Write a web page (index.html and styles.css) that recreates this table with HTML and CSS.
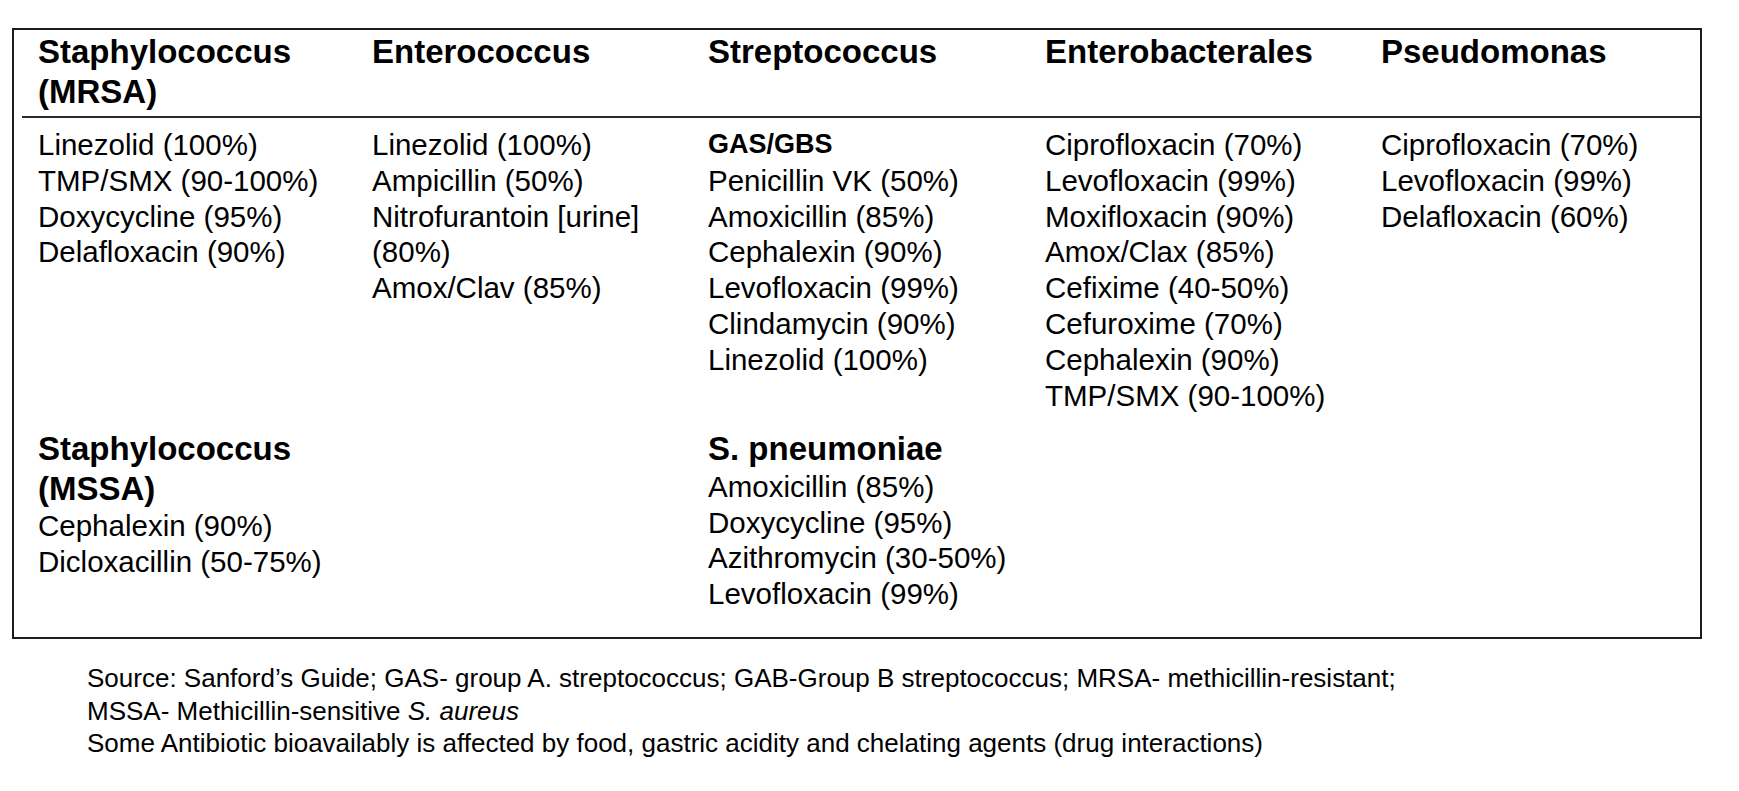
FILE: index.html
```html
<!DOCTYPE html>
<html>
<head>
<meta charset="utf-8">
<link rel="stylesheet" href="styles.css">
</head>
<body>
<div class="page">
  <div class="box">
    <div class="head-row">
      <div class="grid">
        <div class="hcell">Staphylococcus (MRSA)</div>
        <div class="hcell">Enterococcus</div>
        <div class="hcell">Streptococcus</div>
        <div class="hcell">Enterobacterales</div>
        <div class="hcell">Pseudomonas</div>
      </div>
    </div>
    <div class="grid body-grid">
      <div class="cell">
        <div class="line">Linezolid (100%)</div>
        <div class="line">TMP/SMX (90-100%)</div>
        <div class="line">Doxycycline (95%)</div>
        <div class="line">Delafloxacin (90%)</div>
      </div>
      <div class="cell">
        <div class="line">Linezolid (100%)</div>
        <div class="line">Ampicillin (50%)</div>
        <div class="line">Nitrofurantoin [urine]<br>(80%)</div>
        <div class="line">Amox/Clav (85%)</div>
      </div>
      <div class="cell">
        <div class="line sub">GAS/GBS</div>
        <div class="line">Penicillin VK (50%)</div>
        <div class="line">Amoxicillin (85%)</div>
        <div class="line">Cephalexin (90%)</div>
        <div class="line">Levofloxacin (99%)</div>
        <div class="line">Clindamycin (90%)</div>
        <div class="line">Linezolid (100%)</div>
      </div>
      <div class="cell">
        <div class="line">Ciprofloxacin (70%)</div>
        <div class="line">Levofloxacin (99%)</div>
        <div class="line">Moxifloxacin (90%)</div>
        <div class="line">Amox/Clax (85%)</div>
        <div class="line">Cefixime (40-50%)</div>
        <div class="line">Cefuroxime (70%)</div>
        <div class="line">Cephalexin (90%)</div>
        <div class="line">TMP/SMX (90-100%)</div>
      </div>
      <div class="cell">
        <div class="line">Ciprofloxacin (70%)</div>
        <div class="line">Levofloxacin (99%)</div>
        <div class="line">Delafloxacin (60%)</div>
      </div>

      <div class="cell">
        <div class="sec-title">Staphylococcus (MSSA)</div>
        <div class="line">Cephalexin (90%)</div>
        <div class="line">Dicloxacillin (50-75%)</div>
      </div>
      <div class="cell"></div>
      <div class="cell">
        <div class="sec-title">S. pneumoniae</div>
        <div class="line">Amoxicillin (85%)</div>
        <div class="line">Doxycycline (95%)</div>
        <div class="line">Azithromycin (30-50%)</div>
        <div class="line">Levofloxacin (99%)</div>
      </div>
      <div class="cell"></div>
      <div class="cell"></div>
    </div>
  </div>
  <div class="notes">
    <div class="note">Source: Sanford’s Guide; GAS- group A. streptococcus; GAB-Group B streptococcus; MRSA- methicillin-resistant;</div>
    <div class="note">MSSA- Methicillin-sensitive <em>S. aureus</em></div>
    <div class="note">Some Antibiotic bioavailably is affected by food, gastric acidity and chelating agents (drug interactions)</div>
  </div>
</div>
</body>
</html>
```

FILE: styles.css
```css
html, body {
  margin: 0;
  padding: 0;
  background: #ffffff;
}

body {
  font-family: "Liberation Sans", Arial, Helvetica, sans-serif;
  color: #000;
}

.page {
  padding: 28px 0 0 12px;
}

.box {
  width: 1690px;
  box-sizing: border-box;
  border: 2px solid #1c1c1c;
  padding-bottom: 25px;
}

.grid {
  display: grid;
  grid-template-columns: 334px 336px 337px 336px 1fr;
}

.head-row {
  margin-left: 8px;
  border-bottom: 2px solid #2a2a2a;
  padding: 2px 0 4px 16px;
}

.hcell {
  font-size: 33px;
  font-weight: bold;
  line-height: 40px;
  padding-right: 12px;
}

.body-grid {
  padding: 9px 0 0 24px;
  row-gap: 16px;
}

.cell {
  min-width: 0;
  white-space: nowrap;
}

.line {
  font-size: 29.5px;
  line-height: 35.8px;
}

.line.sub {
  font-size: 27px;
  font-weight: bold;
}

.sec-title {
  font-size: 33px;
  font-weight: bold;
  line-height: 39.5px;
  white-space: normal;
  padding-right: 12px;
}

.notes {
  padding: 23px 0 0 75px;
}

.note {
  font-size: 26px;
  line-height: 32.5px;
}

.note em {
  font-style: italic;
}
```
